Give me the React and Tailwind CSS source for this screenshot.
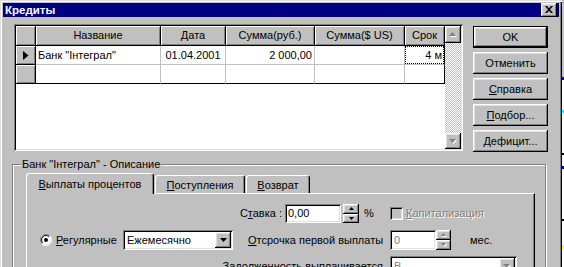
import React from 'react';

// win95 bevels
const raised =
  'shadow-[inset_-1px_-1px_0_#000,inset_1px_1px_0_#fff,inset_-2px_-2px_0_#808080,inset_2px_2px_0_#dfdfdf]';
const sunken =
  'shadow-[inset_1px_1px_0_#808080,inset_-1px_-1px_0_#fff,inset_2px_2px_0_#000,inset_-2px_-2px_0_#dfdfdf]';
const fixedCell =
  'bg-[#c0c0c0] border-r border-b border-black shadow-[inset_1px_1px_0_#fff,inset_-1px_-1px_0_#808080]';
const disabledText = 'text-[#808080] [text-shadow:1px_1px_0_#fff]';
const checker =
  'bg-[repeating-conic-gradient(#c0c0c0_0%_25%,#ffffff_0%_50%)] [background-size:2px_2px]';

const headers = [
  { w: 'w-[125px]', t: 'Название' },
  { w: 'w-[65px]', t: 'Дата' },
  { w: 'w-[89px]', t: 'Сумма(руб.)' },
  { w: 'w-[90px]', t: 'Сумма($ US)' },
  { w: 'w-[40px]', t: 'Срок' },
];

const TriDown = ({ color = '#000', w = 7, h = 4 }) => (
  <svg width={w} height={h} viewBox={`0 0 ${w} ${h}`}>
    <path d={`M0 0H${w}L${w / 2} ${h}Z`} fill={color} />
  </svg>
);

const TriUp = ({ color = '#000', w = 7, h = 4 }) => (
  <svg width={w} height={h} viewBox={`0 0 ${w} ${h}`}>
    <path d={`M0 ${h}H${w}L${w / 2} 0Z`} fill={color} />
  </svg>
);

const GrayArrow = ({ up, w = 7, h = 4 }) => (
  <svg width={w + 1} height={h + 1} viewBox={`0 0 ${w + 1} ${h + 1}`}>
    {up ? (
      <>
        <path d={`M1 ${h + 1}H${w + 1}L${w / 2 + 1} 1Z`} fill="#fff" />
        <path d={`M0 ${h}H${w}L${w / 2} 0Z`} fill="#808080" />
      </>
    ) : (
      <>
        <path d={`M1 1H${w + 1}L${w / 2 + 1} ${h + 1}Z`} fill="#fff" />
        <path d={`M0 0H${w}L${w / 2} ${h}Z`} fill="#808080" />
      </>
    )}
  </svg>
);

const Btn = ({ children, def }) => (
  <div
    className={`flex h-[22px] w-[75px] items-center justify-center bg-[#c0c0c0] ${raised} ${
      def ? 'border border-black' : ''
    }`}
  >
    {children}
  </div>
);

const Spin = ({ disabled, w = 'w-[16px]', h = 'h-[19px]' }) => (
  <div className={`flex flex-col ${w} ${h}`}>
    <div className={`flex flex-1 items-center justify-center bg-[#c0c0c0] ${raised}`}>
      {disabled ? <GrayArrow up w={5} h={3} /> : <TriUp w={5} h={3} />}
    </div>
    <div className={`flex flex-1 items-center justify-center bg-[#c0c0c0] ${raised}`}>
      {disabled ? <GrayArrow w={5} h={3} /> : <TriDown w={5} h={3} />}
    </div>
  </div>
);

const Radio = () => (
  <svg width="12" height="12" viewBox="0 0 12 12">
    <defs>
      <linearGradient id="ro" x1="0" y1="0" x2="1" y2="1">
        <stop offset="0.5" stopColor="#808080" />
        <stop offset="0.5" stopColor="#ffffff" />
      </linearGradient>
      <linearGradient id="ri" x1="0" y1="0" x2="1" y2="1">
        <stop offset="0.5" stopColor="#000000" />
        <stop offset="0.5" stopColor="#dfdfdf" />
      </linearGradient>
    </defs>
    <circle cx="6" cy="6" r="5.5" fill="#fff" stroke="url(#ro)" />
    <circle cx="6" cy="6" r="4.5" fill="#fff" stroke="url(#ri)" />
    <circle cx="6" cy="6" r="2" fill="#000" />
  </svg>
);

const DataCell = ({ w, children, align = 'justify-start', last, bottom, focus }) => (
  <div
    className={`${w} flex bg-white border-r border-b border-[#c0c0c0] ${last ? 'border-r-black' : ''} ${
      bottom ? 'border-b-black' : ''
    } ${align} items-center whitespace-nowrap overflow-hidden`}
  >
    {focus ? (
      <div className="flex h-full w-full items-center justify-end border border-dotted border-black pr-[1px]">
        {children}
      </div>
    ) : (
      <span className="px-[2px]">{children}</span>
    )}
  </div>
);

const Grid = () => (
  <div className={`ml-[11px] mt-[7px] flex h-[127px] w-[449px] bg-white p-[2px] ${sunken}`}>
    <div className="flex w-[429px] flex-col">
      <div className="flex h-[20px]">
        <div className={`w-[20px] ${fixedCell}`} />
        {headers.map((h) => (
          <div key={h.t} className={`${h.w} ${fixedCell} flex items-center justify-center`}>
            {h.t}
          </div>
        ))}
      </div>
      <div className="flex h-[19px]">
        <div className={`w-[20px] ${fixedCell} flex items-center justify-center`}>
          <svg width="6" height="9" viewBox="0 0 6 9">
            <path d="M0 0L5.5 4.5L0 9Z" fill="#000" />
          </svg>
        </div>
        <DataCell w="w-[125px]">Банк "Інтеграл"</DataCell>
        <DataCell w="w-[65px]" align="justify-center">
          01.04.2001
        </DataCell>
        <DataCell w="w-[89px]" align="justify-end">
          2 000,00
        </DataCell>
        <DataCell w="w-[90px]" />
        <DataCell w="w-[40px]" last focus>
          4 м
        </DataCell>
      </div>
      <div className="flex h-[19px]">
        <div className={`w-[20px] ${fixedCell}`} />
        <DataCell w="w-[125px]" bottom />
        <DataCell w="w-[65px]" bottom />
        <DataCell w="w-[89px]" bottom />
        <DataCell w="w-[90px]" bottom />
        <DataCell w="w-[40px]" bottom last />
      </div>
    </div>
    <div className="flex w-[16px] flex-col">
      <div className={`flex h-[17px] items-center justify-center bg-[#c0c0c0] ${raised}`}>
        <GrayArrow up />
      </div>
      <div className={`flex-1 ${checker}`} />
      <div className={`flex h-[16px] items-center justify-center bg-[#c0c0c0] ${raised}`}>
        <GrayArrow />
      </div>
    </div>
  </div>
);

const Tab = ({ active, w, children }) => (
  <div
    className={`${w} flex justify-center rounded-t-[3px] border-l border-t border-white border-r border-r-black bg-[#c0c0c0] shadow-[inset_-1px_0_0_#808080] ${
      active ? 'relative z-10 -mb-px h-[21px] pt-[4px]' : 'ml-[1px] h-[18px] pt-[3px]'
    }`}
  >
    {children}
  </div>
);

const RightStrip = () => (
  <div className="flex w-[2px] flex-col">
    <div className="h-[77px] bg-[#c0c0c0]" />
    <div className="h-[3px] bg-[#0000ff]" />
    <div className="h-[30px] bg-[#ffffff]" />
    <div className="h-[3px] bg-[#00ffff]" />
    <div className="h-[40px] bg-[#ffffff]" />
    <div className="h-[2px] bg-black" />
    <div className="h-[11px] bg-[#ffffff]" />
    <div className="h-[3px] bg-[#000080]" />
    <div className="h-[50px] bg-[#ffffff]" />
    <div className="h-[2px] bg-black" />
    <div className="h-[24px] bg-[#ffffff]" />
    <div className="h-[4px] bg-[#ffff00]" />
    <div className="flex-1 bg-[#ffffff]" />
  </div>
);

export default function App() {
  return (
    <div className="flex h-[267px] w-[564px] overflow-hidden bg-[#c0c0c0] font-['Liberation_Sans',Arial,sans-serif] text-[11px] leading-[13px] text-black">
      <div className="flex h-full w-[562px] flex-col px-[3px] pt-[3px] shadow-[inset_1px_1px_0_#dfdfdf,inset_2px_2px_0_#fff,inset_-1px_0_0_#000,inset_-2px_0_0_#808080]">
        {/* title */}
        <div className="flex h-[18px] items-center justify-between bg-[#000080] pl-[2px] pr-[2px]">
          <span className="text-[11.5px] font-bold text-white">Кредиты</span>
          <div className={`flex h-[14px] w-[16px] items-center justify-center bg-[#c0c0c0] pb-[1px] ${raised}`}>
            <svg width="8" height="7" viewBox="0 0 8 7">
              <path d="M0 0h2l2 2.3L6 0h2L5 3.5 8 7H6L4 4.7 2 7H0l3-3.5z" fill="#000" />
            </svg>
          </div>
        </div>

        <div className="flex items-start">
          <Grid />
          <div className="ml-[10px] mt-[9px] flex flex-col gap-[4px]">
            <Btn def>OK</Btn>
            <Btn>Отменить</Btn>
            <Btn>
              <span>
                <u>С</u>правка
              </span>
            </Btn>
            <Btn>
              <span>
                <u>П</u>одбор...
              </span>
            </Btn>
            <Btn>
              <span>
                <u>Д</u>ефицит...
              </span>
            </Btn>
          </div>
        </div>

        {/* group box */}
        <div className="relative ml-[9px] mt-[12px] h-[140px] w-[534px] border border-[#808080] pl-[13px] pt-[8px] shadow-[inset_1px_1px_0_#fff,1px_1px_0_#fff]">
          <span className="absolute left-[8px] top-[-7px] bg-[#c0c0c0] px-[1px]">Банк "Інтеграл" - Описание</span>

          <div className="flex h-[20px] items-end">
            <Tab active w="w-[128px]">
              <span>
                <u>В</u>ыплаты процентов
              </span>
            </Tab>
            <Tab w="w-[90px]">
              <span>
                <u>П</u>оступления
              </span>
            </Tab>
            <Tab w="w-[64px]">
              <span>
                <u>В</u>озврат
              </span>
            </Tab>
          </div>

          <div className="h-[110px] w-[509px] border-l border-t border-white border-r border-r-black pt-[10px] shadow-[inset_-1px_0_0_#808080]">
            {/* row 1 */}
            <div className="flex h-[19px] items-center">
              <div className="w-[255px] text-right">
                С<u>т</u>авка :
              </div>
              <div className={`ml-[3px] flex h-[19px] w-[56px] items-center bg-white pl-[3px] ${sunken}`}>0,00</div>
              <div className="ml-[2px]">
                <Spin />
              </div>
              <div className="w-[31px] pl-[5px]">%</div>
              <div className={`h-[13px] w-[13px] bg-[#c0c0c0] ${sunken}`} />
              <div className={`ml-[3px] ${disabledText}`}>
                <u>К</u>апитализация
              </div>
            </div>

            {/* row 2 */}
            <div className="mt-[7px] flex h-[20px] items-center">
              <div className="ml-[13px] flex">
                <Radio />
              </div>
              <div className="ml-[4px] w-[67px]">
                <u>Р</u>егулярные
              </div>
              <div className={`flex h-[20px] w-[110px] items-center bg-white pl-[4px] pr-[2px] ${sunken}`}>
                <span className="flex-1">Ежемесячно</span>
                <div className={`flex h-[16px] w-[16px] items-center justify-center bg-[#c0c0c0] ${raised}`}>
                  <TriDown />
                </div>
              </div>
              <div className="ml-[15px] w-[142px] whitespace-nowrap">
                <u>О</u>тсрочка первой выплаты
              </div>
              <div className={`flex h-[20px] w-[46px] items-center bg-white pl-[4px] text-[#808080] ${sunken}`}>0</div>
              <Spin disabled w="w-[15px]" h="h-[20px]" />
              <div className="ml-[19px]">мес.</div>
            </div>

            {/* row 3 */}
            <div className="mt-[6px] flex h-[20px] items-center">
              <div className="w-[363px] whitespace-nowrap pr-[7px] text-right">Задолженность выплачивается</div>
              <div className={`flex h-[20px] w-[127px] items-center bg-white pl-[4px] pr-[2px] text-[#808080] ${sunken}`}>
                <span className="flex-1">В</span>
                <div className={`flex h-[16px] w-[16px] items-center justify-center bg-[#c0c0c0] ${raised}`}>
                  <GrayArrow />
                </div>
              </div>
            </div>
          </div>
        </div>
      </div>
      <RightStrip />
    </div>
  );
}
